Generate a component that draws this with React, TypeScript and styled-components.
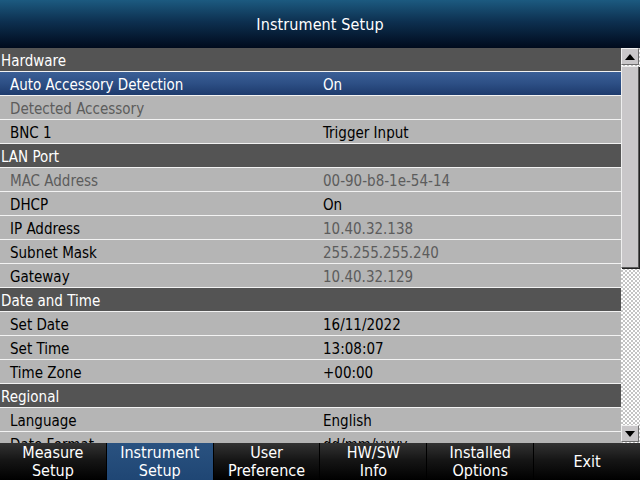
import React from "react";
import styled, { createGlobalStyle } from "styled-components";

const Global = createGlobalStyle`
  html, body { margin: 0; padding: 0; background: #000; }
  body { font-family: "DejaVu Sans Condensed", "DejaVu Sans", sans-serif; }
`;

const Screen = styled.div`
  width: 640px;
  height: 480px;
  display: flex;
  flex-direction: column;
  overflow: hidden;
  background: #000;
`;

const Header = styled.div`
  height: 48px;
  flex: none;
  box-sizing: border-box;
  padding-top: 1px;
  display: flex;
  align-items: center;
  justify-content: center;
  background: linear-gradient(to bottom, #1c5a80 0%, #0d3050 45%, #000a1c 100%);
  color: #fff;
  font-size: 16px;
  letter-spacing: 0.1px;
`;

const Main = styled.div`
  height: 395px;
  flex: none;
  display: flex;
  overflow: hidden;
`;

const List = styled.div`
  width: 621px;
  flex: none;
  display: flex;
  flex-direction: column;
  background: #b5b5b5;
`;

type RowKind = "section" | "item" | "selected";

const Row = styled.div<{ $kind: RowKind }>`
  height: 24px;
  flex: none;
  box-sizing: border-box;
  display: flex;
  align-items: center;
  padding-top: 3px;
  border-bottom: 1px solid #f2f2f2;
  font-size: 15px;
  padding-left: ${(p) => (p.$kind === "section" ? "1px" : "10px")};
  color: ${(p) => (p.$kind === "item" ? "#000" : "#fff")};
  background: ${(p) =>
    p.$kind === "section"
      ? "#545454"
      : p.$kind === "selected"
      ? "linear-gradient(to bottom, #3b5f96 0%, #2d4f85 50%, #1d3a6c 100%)"
      : "#b5b5b5"};
`;

const Label = styled.span<{ $dim?: boolean }>`
  width: 313px;
  flex: none;
  white-space: nowrap;
  color: ${(p) => (p.$dim ? "#5c5c5c" : "inherit")};
`;

const Value = styled.span<{ $dim?: boolean }>`
  white-space: nowrap;
  color: ${(p) => (p.$dim ? "#5c5c5c" : "inherit")};
`;

const ScrollBar = styled.div`
  width: 19px;
  flex: none;
  display: flex;
  flex-direction: column;
  background-color: #ffffff;
  background-image: repeating-conic-gradient(#c4c4c4 0% 25%, #ffffff 0% 50%);
  background-size: 4px 4px;
`;

const ArrowButton = styled.div<{ $down?: boolean }>`
  height: 17px;
  flex: none;
  margin-top: ${(p) => (p.$down ? "auto" : "0")};
  margin-bottom: ${(p) => (p.$down ? "1px" : "0")};
  box-sizing: border-box;
  width: 18px;
  background: #c9c7c9;
  border: 1px solid #6d6d6d;
  border-top-color: #f0f0f0;
  border-left-color: #f0f0f0;
  display: flex;
  align-items: center;
  justify-content: center;
`;

const Thumb = styled.div`
  margin-top: 1px;
  height: 202px;
  width: 18px;
  flex: none;
  box-sizing: border-box;
  background: #c9c7c9;
  border: 1px solid #5a5a5a;
  border-top-color: #eeeeee;
  border-left-color: #eeeeee;
  box-shadow: 1px 1px 0 #222;
`;

const Footer = styled.div`
  height: 37px;
  flex: none;
  display: flex;
  gap: 1px;
  background: #000;
`;

const SoftKey = styled.div<{ $active?: boolean }>`
  flex: 1;
  display: flex;
  align-items: center;
  justify-content: center;
  text-align: center;
  color: #fff;
  font-size: 16px;
  line-height: 18px;
  background: ${(p) =>
    p.$active
      ? "linear-gradient(to bottom, #2a5280 0%, #1f4674 100%)"
      : "linear-gradient(to bottom, #333333 0%, #161616 45%, #000000 100%)"};
`;

const Arrow = ({ down }: { down?: boolean }) => (
  <svg width="10" height="6" viewBox="0 0 10 6">
    <polygon points={down ? "0,0 10,0 5,6" : "0,6 10,6 5,0"} fill="#000" />
  </svg>
);

type Entry = {
  kind: RowKind;
  label: string;
  value?: string;
  dimLabel?: boolean;
  dimValue?: boolean;
};

const entries: Entry[] = [
  { kind: "section", label: "Hardware" },
  { kind: "selected", label: "Auto Accessory Detection", value: "On" },
  { kind: "item", label: "Detected Accessory", dimLabel: true },
  { kind: "item", label: "BNC 1", value: "Trigger Input" },
  { kind: "section", label: "LAN Port" },
  { kind: "item", label: "MAC Address", value: "00-90-b8-1e-54-14", dimLabel: true, dimValue: true },
  { kind: "item", label: "DHCP", value: "On" },
  { kind: "item", label: "IP Address", value: "10.40.32.138", dimValue: true },
  { kind: "item", label: "Subnet Mask", value: "255.255.255.240", dimValue: true },
  { kind: "item", label: "Gateway", value: "10.40.32.129", dimValue: true },
  { kind: "section", label: "Date and Time" },
  { kind: "item", label: "Set Date", value: "16/11/2022" },
  { kind: "item", label: "Set Time", value: "13:08:07" },
  { kind: "item", label: "Time Zone", value: "+00:00" },
  { kind: "section", label: "Regional" },
  { kind: "item", label: "Language", value: "English" },
  { kind: "item", label: "Date Format", value: "dd/mm/yyyy" },
];

const keys = [
  ["Measure", "Setup"],
  ["Instrument", "Setup"],
  ["User", "Preference"],
  ["HW/SW", "Info"],
  ["Installed", "Options"],
  ["Exit"],
];

export default function App() {
  return (
    <Screen>
      <Global />
      <Header>Instrument Setup</Header>
      <Main>
        <List>
          {entries.map((e) => (
            <Row key={e.label} $kind={e.kind}>
              <Label $dim={e.dimLabel}>{e.label}</Label>
              {e.value && <Value $dim={e.dimValue}>{e.value}</Value>}
            </Row>
          ))}
        </List>
        <ScrollBar>
          <ArrowButton>
            <Arrow />
          </ArrowButton>
          <Thumb />
          <ArrowButton $down>
            <Arrow down />
          </ArrowButton>
        </ScrollBar>
      </Main>
      <Footer>
        {keys.map((k, i) => (
          <SoftKey key={k.join(" ")} $active={i === 1}>
            <div>
              {k.map((line) => (
                <div key={line}>{line}</div>
              ))}
            </div>
          </SoftKey>
        ))}
      </Footer>
    </Screen>
  );
}
